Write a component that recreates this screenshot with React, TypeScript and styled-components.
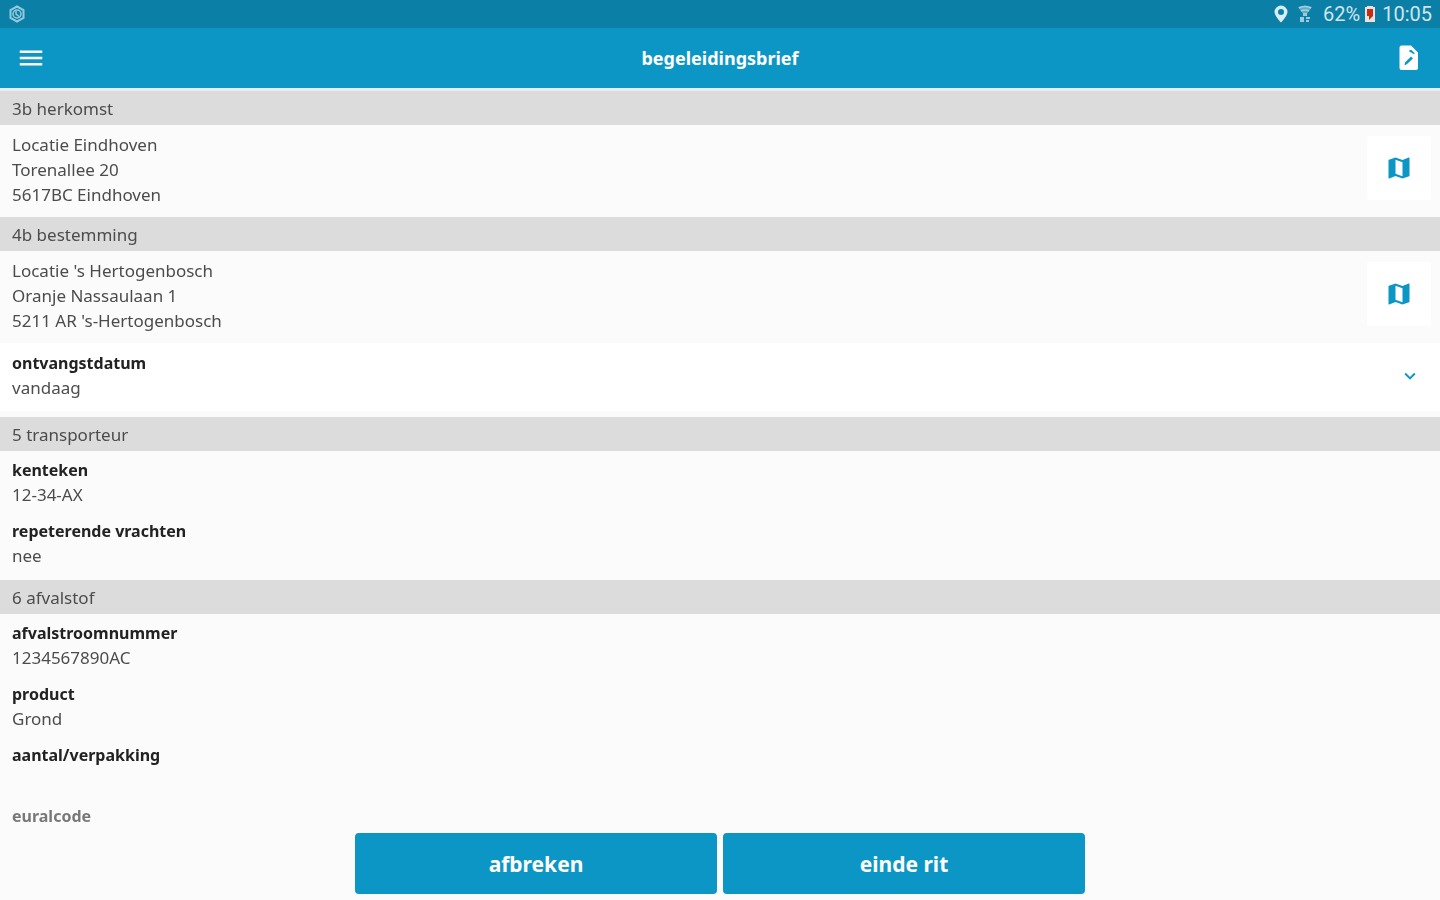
import React from "react";
import styled, { createGlobalStyle } from "styled-components";
import { MdMap, MdMenu, MdExpandMore } from "react-icons/md";

const BLUE = "#0c96c5";

const GlobalStyle = createGlobalStyle`
  * { box-sizing: border-box; }
  body {
    margin: 0;
    background: #fbfbfb;
    color: #4c4c4c;
    font-family: "Noto Sans", "Open Sans", sans-serif;
  }
  button { font-family: inherit; cursor: pointer; }
  svg { display: block; }
`;

const Screen = styled.div`
  display: flex;
  flex-direction: column;
  height: 100vh;
`;

const StatusBar = styled.div`
  display: flex;
  flex: none;
  align-items: center;
  justify-content: space-between;
  height: 28px;
  padding: 0 8px;
  background: #0c7fa6;
  color: #cfe6ee;
  font: 20px/28px Roboto, sans-serif;
`;

const StatusGroup = styled.div`
  display: flex;
  align-items: center;
`;

const StatusItem = styled.span<{ $gap: number }>`
  margin-left: ${(p) => p.$gap}px;
`;

const AppBar = styled.header`
  display: grid;
  flex: none;
  grid-template-columns: 62px 1fr 62px;
  align-items: center;
  height: 60px;
  background: ${BLUE};
  color: #fff;
`;

const Title = styled.h1`
  margin: 0;
  font-size: 18px;
  line-height: 28px;
  font-weight: 700;
  text-align: center;
`;

const BarButton = styled.button`
  display: flex;
  align-items: center;
  justify-content: center;
  height: 60px;
  padding: 0;
  border: 0;
  background: none;
  color: #fff;
`;

const Content = styled.main`
  flex: 1;
  min-height: 0;
  overflow-y: auto;
  scrollbar-width: none;
  border-top: 3px solid #e9edef;
  mask-image: linear-gradient(#000 calc(100% - 40px), rgba(0, 0, 0, 0.6) calc(100% - 20px));
`;

const SectionTitle = styled.h2`
  margin: 0;
  padding: 2px 12px 0;
  background: #dcdcdc;
  font-size: 17px;
  line-height: 32px;
  font-weight: 400;
`;

const Location = styled.div`
  display: flex;
  align-items: flex-start;
  justify-content: space-between;
  padding: 7px 9px 10px 12px;
`;

const Address = styled.address`
  font-size: 17px;
  line-height: 25px;
  font-style: normal;
`;

const MapButton = styled.button`
  display: flex;
  align-items: center;
  justify-content: center;
  width: 64px;
  height: 64px;
  margin-top: 4px;
  padding: 0;
  border: 0;
  border-radius: 2px;
  background: #fff;
  color: ${BLUE};
`;

const DateButton = styled.button`
  display: flex;
  align-items: center;
  justify-content: space-between;
  width: 100%;
  margin-bottom: 6px;
  padding: 8px 19px 11px 12px;
  border: 0;
  background: #fff;
  color: inherit;
  text-align: left;
`;

const Chevron = styled.span`
  display: flex;
  color: ${BLUE};
`;

const Fields = styled.dl`
  display: flex;
  flex-direction: column;
  gap: 12px;
  margin: 0;
  padding: 7px 12px 12px;
`;

const Label = styled.dt`
  color: #222;
  font-size: 16px;
  line-height: 25px;
  font-weight: 700;
`;

const Value = styled.dd`
  min-height: 24px;
  margin: 0;
  font-size: 17px;
  line-height: 24px;
`;

const DateLabel = styled.span`
  display: block;
  color: #222;
  font-size: 16px;
  line-height: 25px;
  font-weight: 700;
`;

const DateValue = styled.span`
  display: block;
  font-size: 17px;
  line-height: 24px;
`;

const Actions = styled.footer`
  display: flex;
  flex: none;
  justify-content: center;
  gap: 6px;
  padding: 6px;
`;

const ActionButton = styled.button`
  flex: 0 1 362px;
  height: 61px;
  border: 0;
  border-radius: 4px;
  background: ${BLUE};
  color: #fff;
  font-size: 21px;
  line-height: 28px;
  font-weight: 700;
`;

function SyncIcon() {
  return (
    <svg width="18" height="18" viewBox="0 0 18 18" fill="none" stroke="#94c9db" strokeWidth="2">
      <path d="M9 1.500l6.500 3.500v8L9 16.500 2.500 13V5z" />
      <circle cx="9" cy="9" r="4" strokeWidth="1.500" />
      <path d="M8 6v3l4 3" strokeWidth="1.500" />
    </svg>
  );
}

function PinIcon() {
  return (
    <svg width="14" height="18" viewBox="0 0 14 18">
      <path fill="#d8edf4" fillRule="evenodd" d="M7 0.500a6.500 6.500 0 0 0-6.500 6.500c0 4 6.500 10.500 6.500 10.500s6.500-6.500 6.500-10.500A6.500 6.500 0 0 0 7 0.500zm0 3.500a3 3 0 1 1 0 6 3 3 0 0 1 0-6z" />
    </svg>
  );
}

function WifiIcon() {
  return (
    <svg width="14" height="18" viewBox="0 0 14 18">
      <path fill="#5fadc7" d="M0 2q7-3 14 0L8 10H6z" />
      <path fill="none" stroke="#a5d0df" strokeWidth="1.500" d="M1 3q6-3 12 0M3 6q4-2 8 0" />
      <path fill="#9bcbdc" d="M5 8h4v3H5zM2 12h4v5H2zM8 12h4v2H8zM8 15h3v2H8z" />
    </svg>
  );
}

function BatteryIcon() {
  return (
    <svg width="12" height="18" viewBox="0 0 12 18">
      <path fill="#e9e3de" d="M3 1h6v1h2v15H1V2h2z" />
      <path fill="#c52b16" d="M3 4h6v7l-4 4v-4H3z" />
    </svg>
  );
}

function SignDocumentIcon() {
  return (
    <svg width="20" height="26" viewBox="0 0 20 26">
      <path fill="#fff" d="M2.500 0.500H12l7 7V23a2 2 0 0 1-2 2H2.500a2 2 0 0 1-2-2V2.500a2 2 0 0 1 2-2z" />
      <path fill={BLUE} d="M10.500 5l2 0 3.500 3.500-2 .5-1.500-1.500-2-.5zM12 11.500l2 2-6 5.500-2.500 1.500.5-3z" />
    </svg>
  );
}

type FieldData = { label: string; value?: string };

function FieldList({ items }: { items: FieldData[] }) {
  return (
    <Fields>
      {items.map((item) => (
        <div key={item.label}>
          <Label>{item.label}</Label>
          <Value>{item.value}</Value>
        </div>
      ))}
    </Fields>
  );
}

function LocationRow({ lines }: { lines: string[] }) {
  return (
    <Location>
      <Address>
        {lines.map((line) => (
          <div key={line}>{line}</div>
        ))}
      </Address>
      <MapButton type="button" aria-label="kaart">
        <MdMap size={28} />
      </MapButton>
    </Location>
  );
}

export default function App() {
  return (
    <Screen>
      <GlobalStyle />
      <StatusBar>
        <SyncIcon />
        <StatusGroup>
          <PinIcon />
          <StatusItem $gap={10}><WifiIcon /></StatusItem>
          <StatusItem $gap={11}>62%</StatusItem>
          <StatusItem $gap={4}><BatteryIcon /></StatusItem>
          <StatusItem $gap={6}>10:05</StatusItem>
        </StatusGroup>
      </StatusBar>
      <AppBar>
        <BarButton type="button" aria-label="menu">
          <MdMenu size={30} />
        </BarButton>
        <Title>begeleidingsbrief</Title>
        <BarButton type="button" aria-label="ondertekenen">
          <SignDocumentIcon />
        </BarButton>
      </AppBar>
      <Content>
        <SectionTitle>3b herkomst</SectionTitle>
        <LocationRow lines={["Locatie Eindhoven", "Torenallee 20", "5617BC Eindhoven"]} />
        <SectionTitle>4b bestemming</SectionTitle>
        <LocationRow lines={["Locatie 's Hertogenbosch", "Oranje Nassaulaan 1", "5211 AR 's-Hertogenbosch"]} />
        <DateButton type="button">
          <span>
            <DateLabel>ontvangstdatum</DateLabel>
            <DateValue>vandaag</DateValue>
          </span>
          <Chevron>
            <MdExpandMore size={22} />
          </Chevron>
        </DateButton>
        <SectionTitle>5 transporteur</SectionTitle>
        <FieldList
          items={[
            { label: "kenteken", value: "12-34-AX" },
            { label: "repeterende vrachten", value: "nee" },
          ]}
        />
        <SectionTitle>6 afvalstof</SectionTitle>
        <FieldList
          items={[
            { label: "afvalstroomnummer", value: "1234567890AC" },
            { label: "product", value: "Grond" },
            { label: "aantal/verpakking" },
            { label: "euralcode" },
          ]}
        />
      </Content>
      <Actions>
        <ActionButton type="button">afbreken</ActionButton>
        <ActionButton type="button">einde rit</ActionButton>
      </Actions>
    </Screen>
  );
}
